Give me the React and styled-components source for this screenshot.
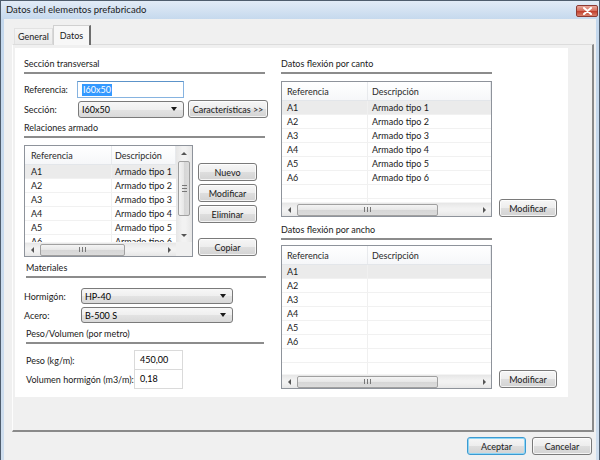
import React from 'react';
import styled, { createGlobalStyle } from 'styled-components';

const GlobalStyle = createGlobalStyle`
  html, body {
    margin: 0;
    padding: 0;
    background: #f0f0f0;
  }
  body {
    font-family: Lato, "Liberation Sans", Arial, sans-serif;
    font-size: 9px;
    color: #000;
  }
  * {
    box-sizing: border-box;
  }
`;

const Window = styled.div`
  width: 600px;
  height: 460px;
  display: flex;
  flex-direction: column;
  border: 1px solid #4f5d6d;
  border-bottom: none;
  background: linear-gradient(to bottom, #e2ebf6 0, #c4d8ed 19px, #cfdeee 100%);
  padding: 0 3px;
`;

const TitleBar = styled.div`
  height: 18px;
  display: flex;
  align-items: flex-start;
  justify-content: space-between;
  padding-left: 2px;
`;

const Title = styled.span`
  margin-top: 3px;
  font-size: 9.5px;
  color: #1a1a1a;
`;

const CloseButton = styled.div`
  width: 22px;
  height: 12px;
  margin-top: 4px;
  margin-right: -2px;
  border: 1px solid #8d3a33;
  border-radius: 2px;
  background: linear-gradient(to bottom, #e9a99c 0%, #d6705f 45%, #c2412f 55%, #d8806c 100%);
  display: flex;
  align-items: center;
  justify-content: center;
`;

const Client = styled.div`
  flex: 1;
  background: #f0f0f0;
  display: flex;
  flex-direction: column;
  padding: 6px 2px 0 8px;
`;

const TabStrip = styled.div`
  display: flex;
  align-items: flex-end;
  height: 19px;
  padding-left: 2px;
  position: relative;
  z-index: 1;
`;

const Tab = styled.div`
  height: ${(p) => (p.$active ? 20 : 16)}px;
  padding: 0 ${(p) => (p.$active ? 6 : 3)}px;
  display: flex;
  align-items: center;
  margin-bottom: ${(p) => (p.$active ? -1 : 0)}px;
  border: 1px solid ${(p) => (p.$active ? '#d0d0d0' : '#e2e2e2')};
  border-bottom: none;
  border-right: ${(p) => (p.$active ? '2px solid #6d6d6d' : '1px solid #d8d8d8')};
  background: ${(p) => (p.$active ? '#f7f7f7' : 'linear-gradient(to bottom, #f4f4f4, #ebebeb)')};
  color: #1a1a1a;
`;

const TabPanel = styled.div`
  height: 388px;
  display: flex;
  border-top: 1px solid #dcdcdc;
  border-left: 1px solid #fdfdfd;
  border-right: 2px solid #8a8a8a;
  border-bottom: 2px solid #8a8a8a;
  padding: 3px 24px 33px 2px;
`;

const Content = styled.div`
  flex: 1;
  background: #fff;
  display: grid;
  grid-template-columns: 245px 277px;
  column-gap: 12px;
  align-content: start;
  padding: 9px 0 0 9px;
`;

const Column = styled.div`
  display: flex;
  flex-direction: column;
`;

const GroupTitle = styled.div`
  width: ${(p) => p.$w || 241}px;
  margin-top: ${(p) => p.$top || 0}px;
  margin-left: ${(p) => p.$indent || 0}px;
  line-height: 14px;
  padding-bottom: 1px;
  border-bottom: 2px solid #8c8c8c;
  color: #1a1a1a;
`;

const FieldRow = styled.div`
  display: flex;
  align-items: center;
  margin-top: ${(p) => p.$top || 0}px;
  margin-left: ${(p) => p.$indent || 0}px;
`;

const Label = styled.span`
  width: ${(p) => p.$w}px;
  flex: none;
  white-space: nowrap;
  color: #1a1a1a;
`;

const TextBox = styled.div`
  width: ${(p) => p.$w}px;
  height: ${(p) => p.$h || 17}px;
  border: 1px solid #86b3e0;
  border-top-color: #5c93c9;
  background: #fff;
  display: flex;
  align-items: center;
  padding-left: 4px;
`;

const Selection = styled.span`
  background: #3399ff;
  color: #fff;
  line-height: 12px;
  padding: 0 1px;
`;

const NumberBox = styled.div`
  width: 49px;
  height: 20px;
  margin-top: ${(p) => p.$top || 0}px;
  border: 1px solid #dadada;
  background: #fff;
  padding: 3px 0 0 5px;
  line-height: 12px;
`;

const Combo = styled.div`
  width: ${(p) => p.$w}px;
  height: ${(p) => p.$h || 17}px;
  display: flex;
  align-items: center;
  justify-content: space-between;
  padding: 0 6px 0 3px;
  border: 1px solid #7a7a7a;
  border-radius: 3px;
  background: linear-gradient(to bottom, #f7f7f7 0%, #efefef 50%, #e3e3e3 51%, #d9d9d9 100%);
`;

const ComboArrow = styled.span`
  width: 0;
  height: 0;
  border-left: 3.5px solid transparent;
  border-right: 3.5px solid transparent;
  border-top: 4px solid #1a1a1a;
`;

const Button = styled.div`
  width: ${(p) => p.$w || 59}px;
  height: 18px;
  flex: none;
  margin-top: ${(p) => p.$top || 0}px;
  margin-left: ${(p) => p.$left || 0}px;
  margin-bottom: ${(p) => p.$bottom || 0}px;
  display: flex;
  align-items: center;
  justify-content: center;
  white-space: nowrap;
  border: 1px solid ${(p) => (p.$default ? '#3c9ad1' : '#7a7a7a')};
  border-radius: 3px;
  background: linear-gradient(to bottom, #f6f6f6 0%, #ededed 50%, #dedede 51%, #d3d3d3 100%);
  box-shadow: inset 0 0 0 1px ${(p) => (p.$default ? '#8fd6f5' : 'rgba(255, 255, 255, 0.75)')};
  color: #1a1a1a;
`;

const ListArea = styled.div`
  display: flex;
  align-items: ${(p) => p.$align || 'flex-start'};
  gap: ${(p) => p.$gap}px;
  margin-top: ${(p) => p.$top || 0}px;
`;

const ButtonStack = styled.div`
  display: flex;
  flex-direction: column;
  gap: 3px;
  padding-top: 18px;
`;

const ListBox = styled.div`
  width: ${(p) => p.$w}px;
  height: ${(p) => p.$h}px;
  flex: none;
  border: 1px solid #8e939b;
  background: #fff;
  display: grid;
  grid-template-columns: ${(p) => (p.$v ? '1fr 16px' : '1fr')};
  grid-template-rows: 1fr 14px;
  overflow: hidden;
`;

const Viewport = styled.div`
  overflow: hidden;
  min-width: 0;
`;

const HeaderRow = styled.div`
  display: grid;
  grid-template-columns: ${(p) => p.$cols};
  height: 19px;
  border-bottom: 1px solid #e3e6ea;
  background: linear-gradient(to bottom, #ffffff, #f6f7f9);
`;

const HeaderCell = styled.div`
  display: flex;
  align-items: center;
  padding-left: ${(p) => p.$pad}px;
  border-right: 1px solid #e8eaed;
  color: #2a2a2a;
  white-space: nowrap;
  overflow: hidden;
`;

const Row = styled.div`
  display: grid;
  grid-template-columns: ${(p) => p.$cols};
  height: 14px;
  background: ${(p) => (p.$sel ? '#ebebeb' : '#fff')};
  border-bottom: 1px solid #f1f1f1;
`;

const Cell = styled.div`
  line-height: 13px;
  padding-left: ${(p) => p.$pad}px;
  white-space: nowrap;
  overflow: hidden;
  border-right: ${(p) => (p.$first ? '1px solid #f0f0f0' : 'none')};
  color: #1a1a1a;
`;

const HScrollBar = styled.div`
  display: flex;
  align-items: center;
  background: linear-gradient(to bottom, #e6e6e6, #f2f2f2 40%, #f2f2f2 60%, #e6e6e6);
  border-top: 1px solid #f4f4f4;
`;

const VScrollBar = styled.div`
  display: flex;
  flex-direction: column;
  align-items: center;
  background: linear-gradient(to right, #e6e6e6, #f2f2f2 40%, #f2f2f2 60%, #e6e6e6);
`;

const ArrowBox = styled.div`
  width: ${(p) => (p.$vertical ? 16 : 14)}px;
  height: ${(p) => (p.$vertical ? 14 : 13)}px;
  flex: none;
  display: flex;
  align-items: center;
  justify-content: center;
`;

const Triangle = styled.span`
  width: 0;
  height: 0;
  border: 3px solid transparent;
  ${(p) => p.$dir === 'left' && 'border-left-width: 0; border-right: 3px solid #555;'}
  ${(p) => p.$dir === 'right' && 'border-right-width: 0; border-left: 3px solid #555;'}
  ${(p) => p.$dir === 'up' && 'border-top-width: 0; border-bottom: 3px solid #555;'}
  ${(p) => p.$dir === 'down' && 'border-bottom-width: 0; border-top: 3px solid #555;'}
`;

const Track = styled.div`
  flex: 1;
  display: flex;
  flex-direction: ${(p) => (p.$vertical ? 'column' : 'row')};
  align-items: center;
  align-self: stretch;
  justify-content: flex-start;
`;

const Thumb = styled.div`
  flex: none;
  display: flex;
  align-items: center;
  justify-content: center;
  border: 1px solid #a0a0a0;
  border-radius: 2px;
  ${(p) =>
    p.$vertical
      ? `width: 12px; height: ${p.$len}px; margin-top: ${p.$start}px;
         background: linear-gradient(to right, #f4f4f4, #e6e6e6 50%, #d6d6d6 51%, #dcdcdc);`
      : `height: 12px; width: ${p.$len}px; margin-left: ${p.$start}px;
         background: linear-gradient(to bottom, #f4f4f4, #e6e6e6 50%, #d6d6d6 51%, #dcdcdc);`}
`;

const Grip = styled.span`
  ${(p) =>
    p.$vertical
      ? `width: 5px; height: 7px;
         background: repeating-linear-gradient(to bottom, #777 0 1px, transparent 1px 3px);`
      : `width: 7px; height: 5px;
         background: repeating-linear-gradient(to right, #777 0 1px, transparent 1px 3px);`}
`;

const Corner = styled.div`
  background: #f0f0f0;
`;

const Footer = styled.div`
  display: flex;
  justify-content: flex-end;
  gap: 6px;
  padding: 5px 2px 0 0;
`;

function HScroll({ start, len }) {
  return (
    <HScrollBar>
      <ArrowBox>
        <Triangle $dir="left" />
      </ArrowBox>
      <Track>
        <Thumb $start={start} $len={len}>
          <Grip />
        </Thumb>
      </Track>
      <ArrowBox>
        <Triangle $dir="right" />
      </ArrowBox>
    </HScrollBar>
  );
}

function VScroll({ start, len }) {
  return (
    <VScrollBar>
      <ArrowBox $vertical>
        <Triangle $dir="up" />
      </ArrowBox>
      <Track $vertical>
        <Thumb $vertical $start={start} $len={len}>
          <Grip $vertical />
        </Thumb>
      </Track>
      <ArrowBox $vertical>
        <Triangle $dir="down" />
      </ArrowBox>
    </VScrollBar>
  );
}

function ListView({ w, h, cols, pads, rows, blanks = 0, vscroll, hthumb }) {
  const all = [...rows, ...Array.from({ length: blanks }, () => ({ ref: '', desc: '' }))];
  return (
    <ListBox $w={w} $h={h} $v={vscroll}>
      <Viewport>
        <HeaderRow $cols={cols}>
          <HeaderCell $pad={pads[0]}>Referencia</HeaderCell>
          <HeaderCell $pad={pads[1]}>Descripción</HeaderCell>
        </HeaderRow>
        {all.map((r, i) => (
          <Row key={i} $cols={cols} $sel={i === 0}>
            <Cell $first $pad={pads[0]}>{r.ref}</Cell>
            <Cell $pad={pads[1]}>{r.desc}</Cell>
          </Row>
        ))}
      </Viewport>
      {vscroll && <VScroll start={1} len={55} />}
      <HScroll start={hthumb[0]} len={hthumb[1]} />
      {vscroll && <Corner />}
    </ListBox>
  );
}

const armados = [1, 2, 3, 4, 5, 6].map((n) => ({ ref: `A${n}`, desc: `Armado tipo ${n}` }));
const sinDescripcion = [1, 2, 3, 4, 5, 6].map((n) => ({ ref: `A${n}`, desc: '' }));

export default function App() {
  return (
    <>
      <GlobalStyle />
      <Window>
        <TitleBar>
          <Title>Datos del elementos prefabricado</Title>
          <CloseButton>
            <svg width="9" height="8" viewBox="0 0 9 8">
              <path d="M1 1 L8 7 M8 1 L1 7" stroke="#fff" strokeWidth="2" strokeLinecap="round" />
            </svg>
          </CloseButton>
        </TitleBar>
        <Client>
          <TabStrip>
            <Tab>General</Tab>
            <Tab $active>Datos</Tab>
          </TabStrip>
          <TabPanel>
            <Content>
              <Column>
                <GroupTitle>Sección transversal</GroupTitle>
                <FieldRow $top={7}>
                  <Label $w={53}>Referencia:</Label>
                  <TextBox $w={107}>
                    <Selection>I60x50</Selection>
                  </TextBox>
                </FieldRow>
                <FieldRow $top={2}>
                  <Label $w={54}>Sección:</Label>
                  <Combo $w={106}>
                    I60x50
                    <ComboArrow />
                  </Combo>
                  <Button $w={80} $left={4}>Características &gt;&gt;</Button>
                </FieldRow>
                <GroupTitle $top={3}>Relaciones armado</GroupTitle>
                <ListArea $gap={5} $top={7}>
                  <ListView
                    w={169}
                    h={112}
                    cols="87px 1fr"
                    pads={[6, 3]}
                    rows={armados}
                    vscroll
                    hthumb={[1, 85]}
                  />
                  <ButtonStack>
                    <Button>Nuevo</Button>
                    <Button>Modificar</Button>
                    <Button>Eliminar</Button>
                    <Button $top={12}>Copiar</Button>
                  </ButtonStack>
                </ListArea>
                <GroupTitle $top={4} $indent={2} $w={240}>Materiales</GroupTitle>
                <FieldRow $top={10}>
                  <Label $w={57}>Hormigón:</Label>
                  <Combo $w={152} $h={16}>
                    HP-40
                    <ComboArrow />
                  </Combo>
                </FieldRow>
                <FieldRow $top={3}>
                  <Label $w={57}>Acero:</Label>
                  <Combo $w={152} $h={16}>
                    B-500 S
                    <ComboArrow />
                  </Combo>
                </FieldRow>
                <GroupTitle $top={4} $indent={2} $w={238}>Peso/Volumen (por metro)</GroupTitle>
                <FieldRow $top={6} $indent={2}>
                  <Label $w={108}>Peso (kg/m):</Label>
                  <NumberBox>450,00</NumberBox>
                </FieldRow>
                <FieldRow $indent={2}>
                  <Label $w={108}>Volumen hormigón (m3/m):</Label>
                  <NumberBox $top={-1}>0,18</NumberBox>
                </FieldRow>
              </Column>
              <Column>
                <GroupTitle $w={211}>Datos flexión por canto</GroupTitle>
                <ListArea $gap={7} $top={7} $align="flex-end">
                  <ListView
                    w={211}
                    h={136}
                    cols="86px 1fr"
                    pads={[5, 4]}
                    rows={armados}
                    blanks={2}
                    hthumb={[1, 141]}
                  />
                  <Button $w={58}>Modificar</Button>
                </ListArea>
                <GroupTitle $w={211} $top={6}>Datos flexión por ancho</GroupTitle>
                <ListArea $gap={7} $top={5} $align="flex-end">
                  <ListView
                    w={211}
                    h={144}
                    cols="86px 1fr"
                    pads={[5, 4]}
                    rows={sinDescripcion}
                    blanks={3}
                    hthumb={[1, 141]}
                  />
                  <Button $w={58} $bottom={1}>Modificar</Button>
                </ListArea>
              </Column>
            </Content>
          </TabPanel>
          <Footer>
            <Button $default>Aceptar</Button>
            <Button $w={60}>Cancelar</Button>
          </Footer>
        </Client>
      </Window>
    </>
  );
}
